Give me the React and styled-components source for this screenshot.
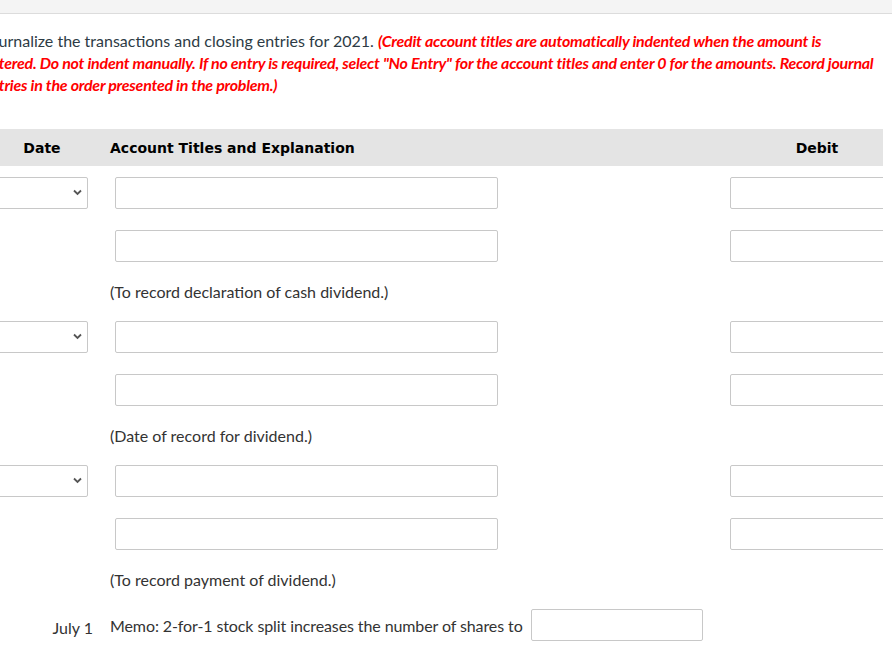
import React from "react";
import styled, { createGlobalStyle } from "styled-components";

const GlobalStyle = createGlobalStyle`
  body {
    margin: 0;
    background: #fff;
    font-family: Lato, "Open Sans", sans-serif;
    color: #333;
    overflow: hidden;
  }
`;

const TopBar = styled.div`
  height: 13px;
  background: #f4f4f4;
  border-bottom: 1px solid #dcdcdc;
`;

const Shell = styled.div`
  width: 892px;
  overflow: hidden;
`;

const Inner = styled.div`
  margin-left: -16px;
  width: 899px;
  overflow: hidden;
`;

const Instructions = styled.p`
  margin: 16px 0 0 -1px;
  font-size: 16px;
  line-height: 22px;
  color: #2d3b45;
  white-space: nowrap;

  em {
    color: #f00;
    font-weight: 700;
    letter-spacing: -0.25px;
  }
`;

const Table = styled.div`
  margin-top: 33px;
`;

const Grid = styled.div`
  display: grid;
  grid-template-columns: 116px 10px 620px 174px;
  align-items: center;
`;

const HeaderRow = styled(Grid)`
  height: 37px;
  background: #e4e4e4;
  font-family: "DejaVu Sans", Verdana, sans-serif;
  font-weight: 700;
  font-size: 14px;
  color: #000;
`;

const HeadCell = styled.div`
  text-align: ${(p) => p.align || "left"};
  grid-column: ${(p) => p.col};
`;

const Entry = styled.div`
  padding: 11px 0 8px;
`;

const Row = styled(Grid)`
  height: 32px;
  margin-bottom: ${(p) => (p.last ? "20px" : "21px")};
`;

const SelectWrap = styled.div`
  position: relative;
  margin-left: 4px;
  width: 100px;
  height: 32px;
`;

const Select = styled.select`
  appearance: none;
  width: 100%;
  height: 100%;
  border: 1px solid #c8c8c8;
  border-radius: 2px;
  background: #fff;
  box-sizing: border-box;
`;

const Chevron = styled.svg`
  position: absolute;
  right: 6px;
  top: 12px;
  pointer-events: none;
`;

const TextInput = styled.input`
  box-sizing: border-box;
  height: 32px;
  width: ${(p) => p.w}px;
  margin-left: ${(p) => p.ml || 0}px;
  border: 1px solid #c8c8c8;
  border-radius: 2px;
  background: #fff;
  font-family: inherit;
`;

const Explain = styled.div`
  grid-column: 3;
  font-size: 16px;
  line-height: 20px;
  color: #333;
`;

const MemoRow = styled(Grid)`
  margin-top: 11px;
  font-size: 16px;
  color: #333;
`;

const MemoDate = styled.div`
  text-align: right;
  padding-right: 7px;
  position: relative;
  top: 2px;
`;

const MemoText = styled.div`
  grid-column: 3 / 5;
  display: flex;
  align-items: center;
  gap: 8px;
  letter-spacing: -0.1px;
`;

const DateSelect = () => (
  <SelectWrap>
    <Select defaultValue="" />
    <Chevron width="9" height="7" viewBox="0 0 9 7">
      <path d="M1 1.5 L4.5 5 L8 1.5" fill="none" stroke="#555" strokeWidth="1.8" />
    </Chevron>
  </SelectWrap>
);

const entries = [
  "(To record declaration of cash dividend.)",
  "(Date of record for dividend.)",
  "(To record payment of dividend.)",
];

const App = () => (
  <>
    <GlobalStyle />
    <TopBar />
    <Shell>
      <Inner>
        <Instructions>
          Journalize the transactions and closing entries for 2021.{" "}
          <em>
            (Credit account titles are automatically indented when the amount is
            <br />
            entered. Do not indent manually. If no entry is required, select "No Entry" for the
            account titles and enter 0 for the amounts. Record journal
            <br />
            entries in the order presented in the problem.)
          </em>
        </Instructions>
        <Table>
          <HeaderRow>
            <HeadCell col={1} align="center">Date</HeadCell>
            <HeadCell col={3}>Account Titles and Explanation</HeadCell>
            <HeadCell col={4} align="center">Debit</HeadCell>
          </HeaderRow>
          {entries.map((text) => (
            <Entry key={text}>
              <Row>
                <DateSelect />
                <span />
                <TextInput w={383} ml={5} />
                <TextInput w={174} />
              </Row>
              <Row last>
                <span />
                <span />
                <TextInput w={383} ml={5} />
                <TextInput w={174} />
              </Row>
              <Grid>
                <Explain>{text}</Explain>
              </Grid>
            </Entry>
          ))}
          <MemoRow>
            <MemoDate>July 1</MemoDate>
            <span />
            <MemoText>
              Memo: 2-for-1 stock split increases the number of shares to
              <TextInput w={172} />
            </MemoText>
          </MemoRow>
        </Table>
      </Inner>
    </Shell>
  </>
);

export default App;
